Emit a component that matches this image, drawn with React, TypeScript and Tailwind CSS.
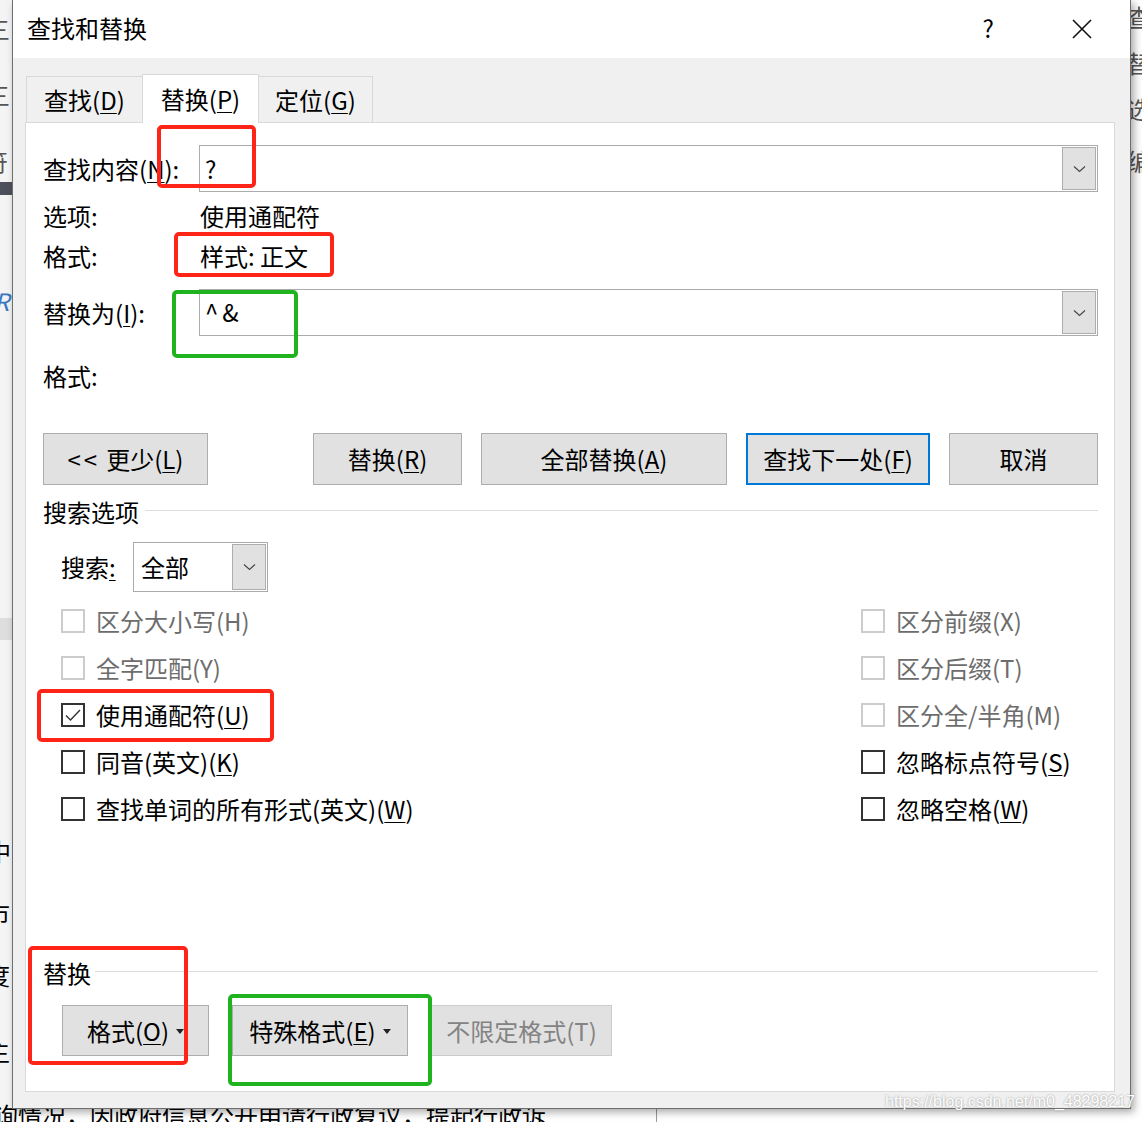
import React from "react";

function U({ children }: { children: React.ReactNode }) {
  return <span className="underline decoration-1 underline-offset-[3px]">{children}</span>;
}

function Chevron() {
  return (
    <svg width="13" height="8" viewBox="0 0 13 8" fill="none">
      <path d="M1 1.5l5.5 5 5.5-5" stroke="#444" strokeWidth="1.1" />
    </svg>
  );
}

function DropButton() {
  return (
    <div className="w-[34px] m-px border border-[#adadad] bg-[#e1e1e1] flex items-center justify-center">
      <Chevron />
    </div>
  );
}

function ComboInput({ value }: { value: React.ReactNode }) {
  return (
    <div className="flex-1 h-[47px] border border-[#ababab] bg-white flex items-stretch">
      <div className="flex-1 flex items-center pl-[5px] leading-[30px]">{value}</div>
      <DropButton />
    </div>
  );
}

function Caret() {
  return (
    <svg width="8" height="5" viewBox="0 0 8 5" className="ml-[7px] mt-[2px]">
      <path d="M0 0h8L4 5z" fill="#222" />
    </svg>
  );
}

interface BtnProps {
  children: React.ReactNode;
  w: string;
  focused?: boolean;
  disabled?: boolean;
}

function Btn({ children, w, focused, disabled }: BtnProps) {
  return (
    <div
      className={`${w} h-full flex items-center justify-center bg-[#e1e1e1] leading-[30px] ${
        focused ? "border-2 border-[#0078d7]" : disabled ? "border border-[#cccccc] text-[#838383]" : "border border-[#adadad]"
      }`}
    >
      {children}
    </div>
  );
}

function CheckRow({ label, disabled, checked }: { label: React.ReactNode; disabled?: boolean; checked?: boolean }) {
  return (
    <div className="h-[47px] flex items-center gap-[11px]">
      <div
        className={`w-[24px] h-[24px] border-2 bg-white flex items-center justify-center ${
          disabled ? "border-[#cccccc]" : "border-[#333333]"
        }`}
      >
        {checked && (
          <svg width="20" height="20" viewBox="0 0 20 20" fill="none">
            <path d="M3 10.5l4.5 4.5L17 5" stroke="#333" strokeWidth="1.4" />
          </svg>
        )}
      </div>
      <span className={`leading-[30px] ${disabled ? "text-[#6d6d6d]" : "text-black"}`}>{label}</span>
    </div>
  );
}

function SectionHeader({ title, gap }: { title: string; gap: string }) {
  return (
    <div className="h-[30px] flex items-center">
      <span className="leading-[30px]">{title}</span>
      <div className={`flex-1 h-px bg-[#dcdcdc] -mt-[3px] ${gap}`} />
    </div>
  );
}

function Mark({ box, color }: { box: string; color: "red" | "green" }) {
  return (
    <div
      className={`absolute rounded-[5px] border-[4px] ${box} ${
        color === "red" ? "border-[#ff2418]" : "border-[#1fb41f]"
      }`}
    />
  );
}

export default function App() {
  return (
    <div className="relative w-[1142px] h-[1122px] overflow-hidden bg-white text-black font-['Noto_Sans_CJK_SC',sans-serif] text-[24px]">
      {/* document behind the dialog */}
      <div className="absolute left-0 top-0 w-[14px] h-[1122px] bg-[#f4f4f4]" />
      <div className="absolute left-0 top-[182px] w-[14px] h-[13px] bg-[#4d4f5c]" />
      <div className="absolute left-0 top-[618px] w-[14px] h-[22px] bg-[#dedede]" />
      <div className="absolute left-[-14px] top-[14px] leading-[30px] text-[#555]">三</div>
      <div className="absolute left-[-14px] top-[80px] leading-[30px] text-[#555]">三</div>
      <div className="absolute left-[-16px] top-[146px] leading-[30px] text-[#555]">符</div>
      <div className="absolute left-[-6px] top-[286px] leading-[30px] text-[#3a78c4] italic">R</div>
      <div className="absolute left-[-13px] top-[836px] leading-[30px]">中</div>
      <div className="absolute left-[-14px] top-[898px] leading-[30px]">市</div>
      <div className="absolute left-[-14px] top-[960px] leading-[30px]">度</div>
      <div className="absolute left-[-14px] top-[1036px] leading-[30px]">主</div>
      <div className="absolute left-[1127px] top-[2px] leading-[30px] text-[#555]">查</div>
      <div className="absolute left-[1127px] top-[48px] leading-[30px] text-[#555]">替</div>
      <div className="absolute left-[1127px] top-[94px] leading-[30px] text-[#555]">选</div>
      <div className="absolute left-[1127px] top-[146px] leading-[30px] text-[#555]">编</div>
      <div className="absolute left-[-6px] top-[1100px] leading-[30px] whitespace-nowrap">
        询情况，因政府信息公开申请行政复议，提起行政诉
      </div>
      <div className="absolute left-[656px] top-[1100px] w-px h-[22px] bg-[#9a9a9a]" />

      {/* dialog window */}
      <div className="absolute left-[12px] top-0 w-[1119px] h-[1109px] bg-[#f0f0f0] border-x border-b border-[#6e6e6e] shadow-[3px_3px_8px_rgba(0,0,0,0.35)] flex flex-col">
        <div className="h-[58px] bg-white flex items-center pl-[14px] shrink-0">
          <span className="leading-[30px] flex-1 -mt-[2px]">查找和替换</span>
          <span className="leading-[30px] mr-[78px] -mt-[2px]">?</span>
          <svg width="20" height="20" viewBox="0 0 20 20" className="mr-[38px]">
            <path d="M1 1l18 18M19 1L1 19" stroke="#111" strokeWidth="1.6" />
          </svg>
        </div>

        {/* tabs */}
        <div className="h-[64px] pt-[16px] pl-[13px] flex items-end shrink-0">
          <div className="w-[116px] h-[46px] border-l border-t border-[#d9d9d9] flex items-center justify-center leading-[30px]">
            查找(<U>D</U>)
          </div>
          <div className="relative z-10 w-[117px] h-[49px] -mb-px bg-white border-x border-t border-[#d9d9d9] flex items-center justify-center leading-[30px]">
            替换(<U>P</U>)
          </div>
          <div className="w-[114px] h-[46px] border-r border-t border-[#d9d9d9] flex items-center justify-center leading-[30px]">
            定位(<U>G</U>)
          </div>
        </div>

        {/* tab page */}
        <div className="ml-[12px] w-[1090px] h-[970px] bg-white border border-[#d9d9d9] pl-[17px] pr-[16px] flex flex-col shrink-0">
          <div className="mt-[22px] h-[47px] flex items-center">
            <span className="w-[156px] leading-[30px]">
              查找内容(<U>N</U>):
            </span>
            <ComboInput value="?" />
          </div>
          <div className="mt-[9px] h-[30px] flex items-center leading-[30px]">
            <span className="w-[157px]">选项:</span>
            <span>使用通配符</span>
          </div>
          <div className="mt-[10px] h-[30px] flex items-center leading-[30px]">
            <span className="w-[157px]">格式:</span>
            <span>样式: 正文</span>
          </div>
          <div className="mt-[18px] h-[47px] flex items-center">
            <span className="w-[156px] leading-[30px]">
              替换为(<U>I</U>):
            </span>
            <ComboInput value={<span className="tracking-[4px] -mt-[2px]">^&</span>} />
          </div>
          <div className="mt-[25px] h-[30px] flex items-center leading-[30px]">
            <span>格式:</span>
          </div>

          <div className="mt-[42px] h-[52px] flex">
            <Btn w="w-[165px]">
              <span className="tracking-[3px]">{"<<"}</span>
              <span className="ml-[6px]">
                更少(<U>L</U>)
              </span>
            </Btn>
            <div className="w-[105px]" />
            <Btn w="w-[149px]">
              替换(<U>R</U>)
            </Btn>
            <div className="w-[19px]" />
            <Btn w="w-[246px]">
              全部替换(<U>A</U>)
            </Btn>
            <div className="w-[19px]" />
            <Btn w="w-[184px]" focused>
              查找下一处(<U>F</U>)
            </Btn>
            <div className="w-[19px]" />
            <Btn w="w-[149px]">取消</Btn>
          </div>

          <div className="mt-[12px]">
            <SectionHeader title="搜索选项" gap="ml-[6px]" />
          </div>

          <div className="mt-[15px] h-[50px] flex items-center pl-[18px]">
            <span className="w-[72px] leading-[30px]">
              搜索<U>:</U>
            </span>
            <div className="w-[135px] h-[50px] border border-[#ababab] bg-white flex items-stretch">
              <div className="flex-1 flex items-center pl-[7px] leading-[30px]">全部</div>
              <DropButton />
            </div>
          </div>

          <div className="mt-[5px] flex">
            <div className="w-[818px] pl-[18px] flex flex-col">
              <CheckRow label="区分大小写(H)" disabled />
              <CheckRow label="全字匹配(Y)" disabled />
              <CheckRow
                checked
                label={
                  <>
                    使用通配符(<U>U</U>)
                  </>
                }
              />
              <CheckRow
                label={
                  <>
                    同音(英文)(<U>K</U>)
                  </>
                }
              />
              <CheckRow
                label={
                  <>
                    查找单词的所有形式(英文)(<U>W</U>)
                  </>
                }
              />
            </div>
            <div className="flex flex-col">
              <CheckRow label="区分前缀(X)" disabled />
              <CheckRow label="区分后缀(T)" disabled />
              <CheckRow label="区分全/半角(M)" disabled />
              <CheckRow
                label={
                  <>
                    忽略标点符号(<U>S</U>)
                  </>
                }
              />
              <CheckRow
                label={
                  <>
                    忽略空格(<U>W</U>)
                  </>
                }
              />
            </div>
          </div>

          <div className="mt-[126px]">
            <SectionHeader title="替换" gap="ml-[4px]" />
          </div>

          <div className="mt-[17px] h-[51px] flex pl-[19px]">
            <Btn w="w-[147px]">
              格式(<U>O</U>)
              <Caret />
            </Btn>
            <div className="w-[23px]" />
            <Btn w="w-[176px]">
              特殊格式(<U>E</U>)
              <Caret />
            </Btn>
            <div className="w-[23px]" />
            <Btn w="w-[181px]" disabled>
              不限定格式(T)
            </Btn>
          </div>
        </div>
      </div>

      {/* watermark */}
      <div className="absolute left-[885px] top-[1092px] text-[16px] leading-[20px] text-white font-['Liberation_Sans',sans-serif] [text-shadow:0_0_2px_#8a8a8a] whitespace-nowrap">
        https://blog.csdn.net/m0_48298217
      </div>

      {/* annotation boxes */}
      <Mark color="red" box="left-[157px] top-[125px] w-[99px] h-[63px]" />
      <Mark color="red" box="left-[174px] top-[232px] w-[160px] h-[45px]" />
      <Mark color="green" box="left-[172px] top-[290px] w-[126px] h-[68px]" />
      <Mark color="red" box="left-[37px] top-[689px] w-[237px] h-[53px]" />
      <Mark color="red" box="left-[28px] top-[946px] w-[160px] h-[119px]" />
      <Mark color="green" box="left-[228px] top-[994px] w-[204px] h-[92px]" />
    </div>
  );
}
